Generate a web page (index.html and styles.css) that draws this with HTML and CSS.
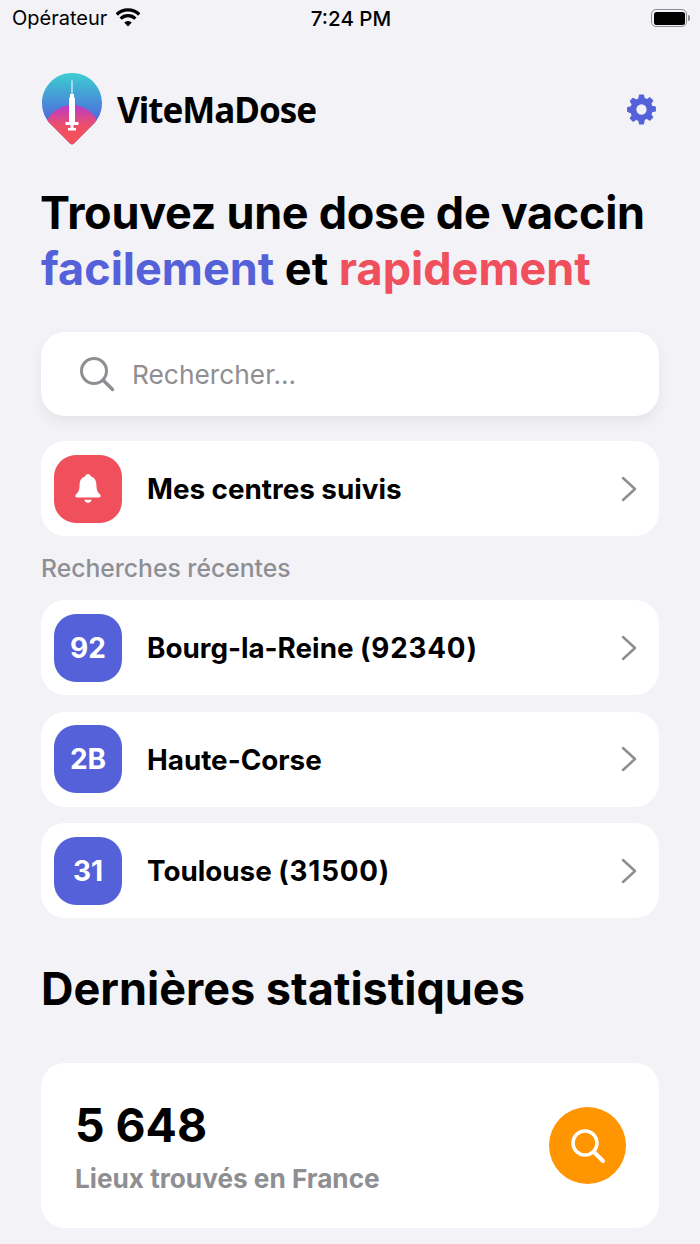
FILE: index.html
```html
<!DOCTYPE html>
<html lang="fr">
<head>
    <meta charset="UTF-8">
    <meta name="viewport" content="width=device-width, initial-scale=1.0">
    <title>ViteMaDose</title>
    <link rel="stylesheet" href="styles.css">
</head>
<body>

    <div class="status-bar">
        <div class="status-left">
            <span>Opérateur</span>
            <svg class="wifi" width="26" height="20" viewBox="0 0 26 20">
                <path d="M13 18.500l-3.800-3.900a5.400 5.400 0 0 1 7.600 0z" fill="#000"/>
                <path d="M5.600 10.700a10.600 10.600 0 0 1 14.800 0" fill="none" stroke="#000" stroke-width="3.200"/>
                <path d="M1.800 6.500a16 16 0 0 1 22.400 0" fill="none" stroke="#000" stroke-width="3.200"/>
            </svg>
        </div>
        <div class="status-time">7:24 PM</div>
        <div class="status-right">
            <div class="battery"><div class="battery-fill"></div></div>
            <div class="battery-tip"></div>
        </div>
    </div>

    <main class="content">
        <header class="brand">
            <div class="brand-left">
                <svg class="logo" width="60" height="72" viewBox="0 0 60 72">
                    <defs>
                        <linearGradient id="pinBlue" x1="0" y1="0" x2="0" y2="1">
                            <stop offset="0" stop-color="#3ccfd0"/>
                            <stop offset="0.7" stop-color="#5060dc"/>
                        </linearGradient>
                        <linearGradient id="pinRed" gradientUnits="userSpaceOnUse" x1="0" y1="32" x2="0" y2="62">
                            <stop offset="0" stop-color="#b93ccb"/>
                            <stop offset="0.7" stop-color="#ee4f68"/>
                            <stop offset="1" stop-color="#f2505f"/>
                        </linearGradient>
                        <clipPath id="pinClip">
                            <path d="M30 0C13.400 0 0 13.400 0 30c0 8.600 3.400 16 9 21.600L28 70.600c1.100 1.100 2.900 1.100 4 0L51 51.600c5.600-5.600 9-13 9-21.600C60 13.400 46.600 0 30 0z"/>
                        </clipPath>
                    </defs>
                    <g clip-path="url(#pinClip)">
                        <rect width="60" height="72" fill="url(#pinBlue)"/>
                        <circle cx="30" cy="60" r="28" fill="url(#pinRed)"/>
                    </g>
                    <path d="M29.500 7.500h1V23h-1z" fill="#fff"/>
                    <path d="M28 21h4v3.500h1V49h-6V24.500h1z" fill="#fff"/>
                    <path d="M23.500 49h13v3h-13zM28.500 52h3v3h-3zM26 55h8v2.500h-8z" fill="#fff"/>
                </svg>
                <span class="brand-name">ViteMaDose</span>
            </div>
            <svg class="gear" width="31" height="31" viewBox="0 0 30 30">
                <path fill-rule="evenodd" fill="#5561d9" stroke="#5561d9" stroke-width="1" stroke-linejoin="round" d="M13 1h4l0.700 3.400c0.900 0.300 1.700 0.600 2.400 1.100l3-1.900 2.800 2.800-1.900 3c0.500 0.800 0.800 1.600 1 2.400l3.400 0.700v4l-3.400 0.700c-0.200 0.800-0.500 1.600-1 2.400l1.900 3-2.800 2.800-3-1.900c-0.700 0.500-1.500 0.800-2.400 1.100L17 29h-4l-0.700-3.400c-0.900-0.300-1.700-0.600-2.400-1.100l-3 1.900-2.800-2.800 1.900-3c-0.500-0.800-0.800-1.600-1-2.400L1.600 17v-4l3.400-0.700c0.200-0.800 0.500-1.600 1-2.400l-1.900-3 2.800-2.800 3 1.900c0.700-0.500 1.500-0.800 2.400-1.100zM15 9.500a5.500 5.500 0 1 0 0 11 5.500 5.500 0 0 0 0-11z"/>
            </svg>
        </header>

        <h1 class="headline">
            <div class="headline-top">Trouvez une dose de vaccin</div>
            <div><span class="blue">facilement</span> et <span class="red">rapidement</span></div>
        </h1>

        <div class="search-box">
            <svg width="36" height="36" viewBox="0 0 36 36">
                <circle cx="15" cy="15" r="12.500" fill="none" stroke="#8e8e93" stroke-width="3"/>
                <path d="M24.500 24.500l9 9" fill="none" stroke="#8e8e93" stroke-width="3.500" stroke-linecap="round"/>
            </svg>
            <span class="search-text">Rechercher...</span>
        </div>

        <a class="row row-follow">
            <div class="row-badge badge-red">
                <svg width="28" height="30" viewBox="0 0 30 32">
                    <path fill="#fff" d="M15 0c1.500 0 2.600 1 2.800 2.400 4 1.200 6.200 4.500 6.200 9 0 5 1 8 4.200 10.800 1 1 0.500 2.800-1.200 2.800H3c-1.700 0-2.200-1.800-1.200-2.800C5 19.400 6 16.400 6 11.400c0-4.500 2.200-7.800 6.200-9C12.400 1 13.500 0 15 0z"/>
                    <path fill="#fff" d="M11 27.500h8c-0.500 2-2 3.200-4 3.200s-3.500-1.200-4-3.200z"/>
                </svg>
            </div>
            <span class="row-title">Mes centres suivis</span>
            <svg class="chevron" width="18" height="26" viewBox="0 0 18 26"><path d="M3 2l12 11L3 24" fill="none" stroke="#8e8e93" stroke-width="2.500" stroke-linecap="round" stroke-linejoin="round"/></svg>
        </a>

        <h2 class="recent-label">Recherches récentes</h2>

        <div class="recent-list">
            <a class="row">
                <div class="row-badge badge-blue">92</div>
                <span class="row-title">Bourg-la-Reine <span class="zip">(92340)</span></span>
                <svg class="chevron" width="18" height="26" viewBox="0 0 18 26"><path d="M3 2l12 11L3 24" fill="none" stroke="#8e8e93" stroke-width="2.500" stroke-linecap="round" stroke-linejoin="round"/></svg>
            </a>
            <a class="row">
                <div class="row-badge badge-blue">2B</div>
                <span class="row-title">Haute-Corse</span>
                <svg class="chevron" width="18" height="26" viewBox="0 0 18 26"><path d="M3 2l12 11L3 24" fill="none" stroke="#8e8e93" stroke-width="2.500" stroke-linecap="round" stroke-linejoin="round"/></svg>
            </a>
            <a class="row">
                <div class="row-badge badge-blue">31</div>
                <span class="row-title">Toulouse <span class="zip">(31500)</span></span>
                <svg class="chevron" width="18" height="26" viewBox="0 0 18 26"><path d="M3 2l12 11L3 24" fill="none" stroke="#8e8e93" stroke-width="2.500" stroke-linecap="round" stroke-linejoin="round"/></svg>
            </a>
        </div>

        <h2 class="stats-title">Dernières statistiques</h2>

        <div class="stat-card">
            <div class="stat-text">
                <div class="stat-number">5 648</div>
                <div class="stat-label">Lieux trouvés en France</div>
            </div>
            <div class="stat-icon">
                <svg width="36" height="36" viewBox="0 0 36 36">
                    <circle cx="15" cy="15" r="12" fill="none" stroke="#fff" stroke-width="3.500"/>
                    <path d="M24.500 24.500l8.500 8.500" fill="none" stroke="#fff" stroke-width="4" stroke-linecap="round"/>
                </svg>
            </div>
        </div>
    </main>

</body>
</html>
```
FILE: styles.css
```css
html, body {
    height: 1244px;
    overflow: hidden;
}

body {
    margin: 0;
    font-family: 'Inter', sans-serif;
    background-color: #f2f2f7;
    color: #000;
}

.status-bar {
    display: grid;
    grid-template-columns: 1fr auto 1fr;
    align-items: center;
    height: 36px;
    padding: 0 10px 0 12px;
    font-size: 20px;
}

.status-left {
    display: flex;
    align-items: center;
    gap: 8px;
}

.status-time {
    font-size: 20.500px;
    font-weight: 500;
}

.status-right {
    display: flex;
    align-items: center;
    justify-content: flex-end;
    gap: 1px;
}

.battery {
    width: 36px;
    height: 18px;
    box-sizing: border-box;
    border: 1.500px solid #8e8e93;
    border-radius: 5px;
    padding: 1.500px;
}

.battery-fill {
    height: 100%;
    background-color: #000;
    border-radius: 2.500px;
}

.battery-tip {
    width: 2px;
    height: 6px;
    background-color: #8e8e93;
    border-radius: 0 2px 2px 0;
}

.content {
    padding: 37px 41px 0;
}

.brand {
    display: flex;
    align-items: center;
    justify-content: space-between;
    height: 72px;
}

.brand-left {
    display: flex;
    align-items: center;
    gap: 15px;
}

.logo {
    display: block;
    margin-left: 1px;
}

.brand-name {
    font-family: 'Noto Sans', sans-serif;
    font-size: 35px;
    font-weight: 700;
    letter-spacing: -1px;
}

.gear {
    margin-right: 2px;
}

.headline {
    margin: 40px 0 0;
    font-size: 45px;
    line-height: 56px;
    font-weight: 700;
    white-space: nowrap;
}

.headline-top {
    margin-left: -1px;
    letter-spacing: -0.300px;
}

.blue {
    color: #5561d9;
}

.red {
    color: #f04f5c;
}

.search-box {
    display: flex;
    align-items: center;
    gap: 17px;
    height: 84px;
    margin-top: 35px;
    padding-left: 38px;
    background-color: #fff;
    border-radius: 24px;
    box-shadow: 0 6px 14px rgba(0, 0, 0, 0.06);
}

.search-text {
    font-size: 26.300px;
    color: #8e8e93;
}

.row {
    display: flex;
    align-items: center;
    height: 95px;
    padding: 0 21px 0 13px;
    background-color: #fff;
    border-radius: 24px;
}

.row-follow {
    margin-top: 25px;
}

.row-badge {
    display: flex;
    align-items: center;
    justify-content: center;
    width: 68px;
    height: 68px;
    border-radius: 22px;
    color: #fff;
    font-size: 28px;
    font-weight: 700;
}

.badge-red {
    background-color: #f04f5c;
}

.badge-blue {
    background-color: #5561d9;
}

.row-title {
    flex: 1;
    margin-left: 25px;
    padding-top: 1px;
    font-size: 27.800px;
    font-weight: 650;
}

.zip {
    letter-spacing: 0.800px;
}

.recent-label {
    margin: 18px 0 0;
    font-size: 24.700px;
    line-height: 29px;
    font-weight: 500;
    color: #8e8e93;
}

.recent-list {
    display: flex;
    flex-direction: column;
    gap: 16.500px;
    margin-top: 17px;
}

.stats-title {
    margin: 40px 0 0;
    font-size: 45px;
    line-height: 62px;
    font-weight: 700;
}

.stat-card {
    display: flex;
    align-items: center;
    justify-content: space-between;
    height: 165px;
    margin-top: 43px;
    padding: 0 33px 0 34px;
    background-color: #fff;
    border-radius: 24px;
}

.stat-number {
    font-size: 46.300px;
    line-height: 56px;
    font-weight: 700;
}

.stat-label {
    margin-top: 10px;
    font-size: 26.200px;
    font-weight: 700;
    color: #8e8e93;
}

.stat-icon {
    display: flex;
    align-items: center;
    justify-content: center;
    width: 77px;
    height: 77px;
    border-radius: 50%;
    background-color: #ff9500;
}
```
